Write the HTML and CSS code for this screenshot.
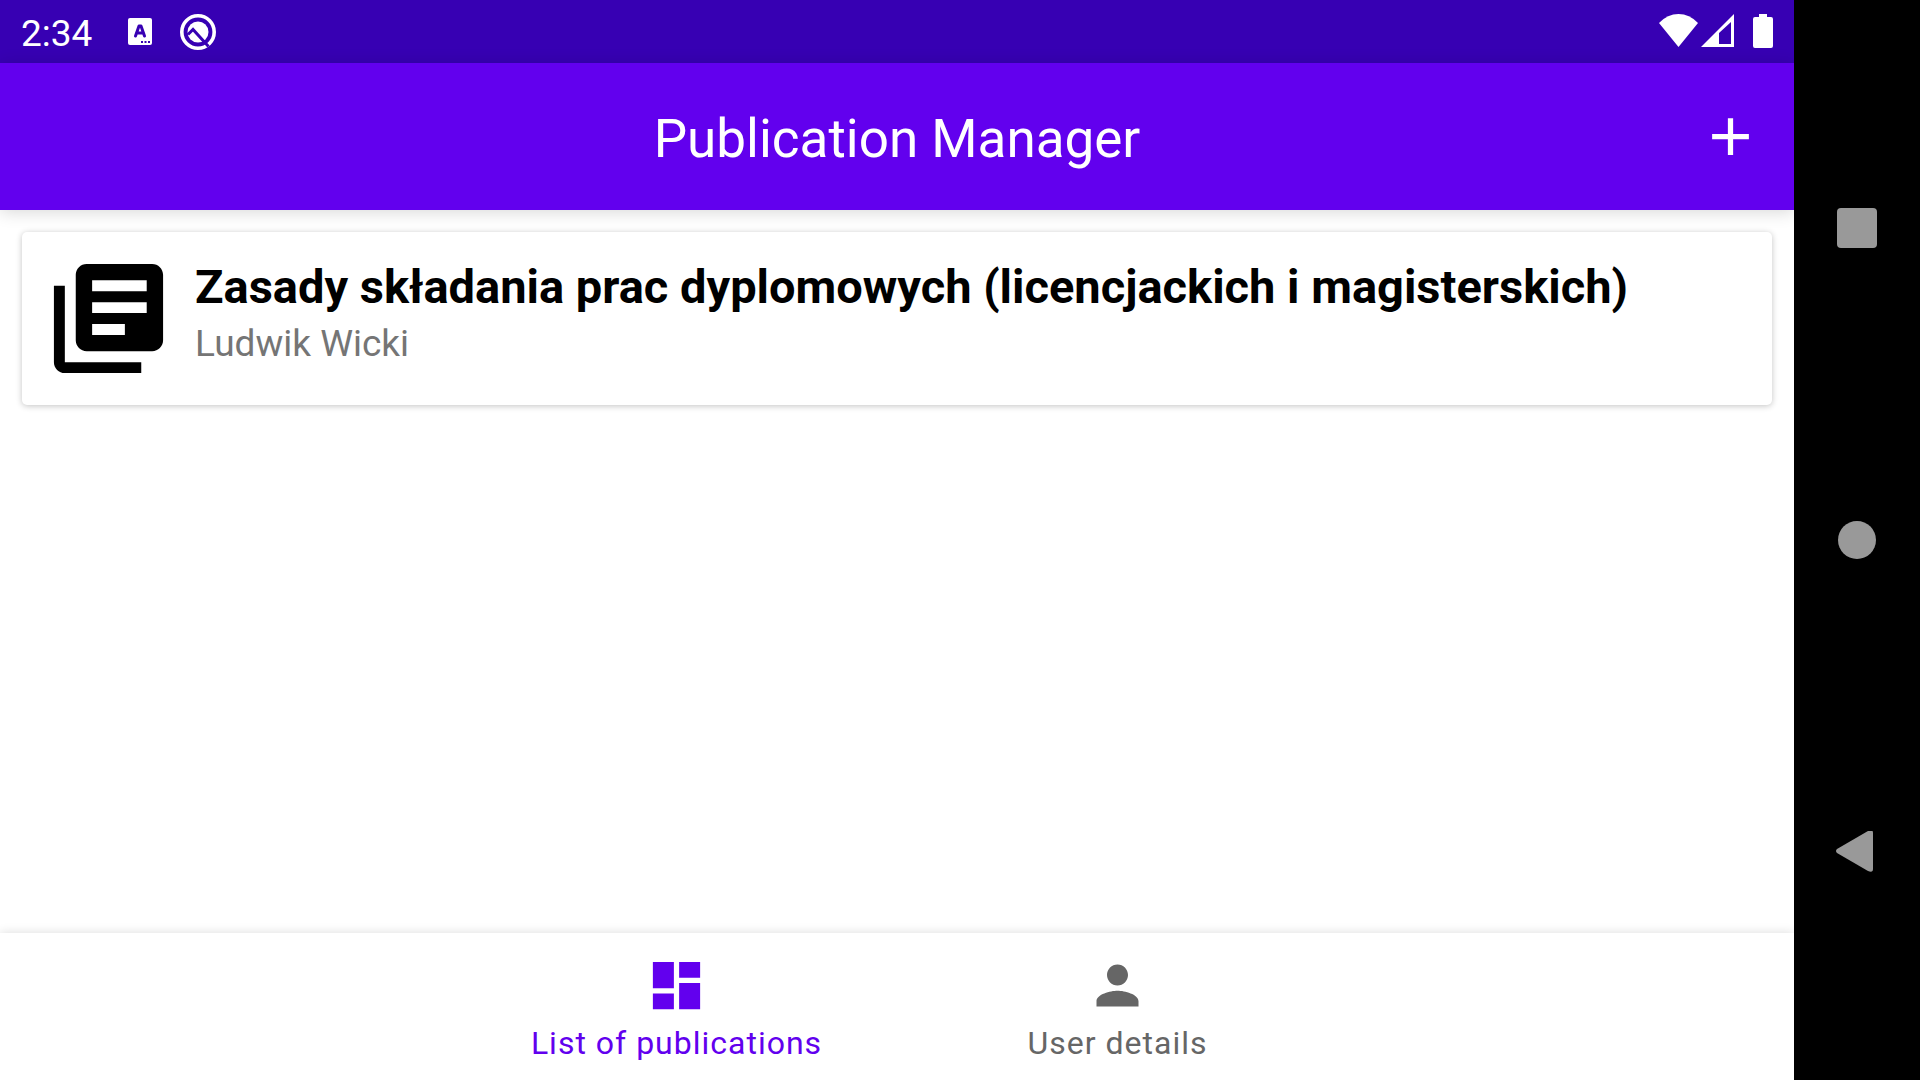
FILE: index.html
```html
<!DOCTYPE html>
<html lang="en">
<head>
<meta charset="utf-8">
<meta name="viewport" content="width=device-width, initial-scale=1">
<title>Publication Manager</title>
<link rel="stylesheet" href="styles.css">
</head>
<body>
<div class="device">
  <div class="screen">
    <div class="status-bar">
      <time class="clock">2:34</time>
      <svg class="note-icon" viewBox="0 0 24 27" aria-hidden="true">
        <rect width="24" height="27" rx="2" fill="#fff"/>
        <path d="M7.500 18 11 8h2l3.500 10M9 15h6" fill="none" stroke="#3700b3" stroke-width="3" stroke-linecap="round" stroke-linejoin="round"/>
        <path d="M13 23h2v2h-2zM16.500 23h2v2h-2zM20 23h2v2h-2z" fill="#3700b3"/>
      </svg>
      <svg class="debug-icon" viewBox="0 0 36 36" aria-hidden="true">
        <circle cx="18" cy="18" r="16.200" fill="none" stroke="#fff" stroke-width="3.600"/>
        <circle cx="18" cy="18" r="10.500" fill="#fff"/>
        <path d="M8 20.500 13 15.500 28.500 32.500" fill="none" stroke="#3700b3" stroke-width="3"/>
      </svg>
      <div class="system-icons">
        <svg class="wifi" viewBox="0 0 39 33" aria-hidden="true"><path d="M0 9Q8.500 0 19.500 0T39 9L19.500 33z" fill="#fff"/></svg>
        <svg class="signal" viewBox="0 0 33 33" aria-hidden="true"><path fill-rule="evenodd" d="M33 0v33H0zM30 8 18 19v11h12z" fill="#fff"/></svg>
        <svg class="battery" viewBox="0 0 20 34" aria-hidden="true"><path d="M6 0h8v3h4q2 0 2 2v27q0 2-2 2H2q-2 0-2-2V5q0-2 2-2h4z" fill="#fff"/></svg>
      </div>
    </div>
    <header class="app-bar">
      <h1 class="app-title">Publication Manager</h1>
      <button class="add" type="button" aria-label="Add publication">
        <svg class="icon" viewBox="0 0 24 24"><path d="M19 13h-6v6h-2v-6H5v-2h6V5h2v6h6z"/></svg>
      </button>
    </header>
    <main class="content">
      <article class="card">
        <svg class="card-icon" viewBox="0 0 24 24" aria-hidden="true"><path d="M4 6H2v14c0 1.100.9 2 2 2h14v-2H4V6zm16-4H8c-1.100 0-2 .9-2 2v12c0 1.100.9 2 2 2h12c1.100 0 2-.9 2-2V4c0-1.100-.9-2-2-2zm-1 9H9V9h10v2zm-4 4H9v-2h6v2zm4-8H9V5h10v2z"/></svg>
        <div class="card-text">
          <h2 class="card-title">Zasady składania prac dyplomowych (licencjackich i magisterskich)</h2>
          <p class="card-author">Ludwik Wicki</p>
        </div>
      </article>
    </main>
    <nav class="bottom-nav">
      <a class="tab tab-active" href="#publications" aria-current="page">
        <svg class="icon" viewBox="0 0 24 24" aria-hidden="true"><path d="M3 13h8V3H3v10zm0 8h8v-6H3v6zm10 0h8V11h-8v10zm0-18v6h8V3h-8z"/></svg>
        <span>List of publications</span>
      </a>
      <a class="tab" href="#user">
        <svg class="icon" viewBox="0 0 24 24" aria-hidden="true"><path d="M12 12c2.210 0 4-1.790 4-4s-1.790-4-4-4-4 1.790-4 4 1.790 4 4 4zm0 2c-2.670 0-8 1.340-8 4v2h16v-2c0-2.660-5.330-4-8-4z"/></svg>
        <span>User details</span>
      </a>
    </nav>
  </div>
  <div class="system-nav">
    <button class="key" type="button" aria-label="Overview"><svg class="key-icon" viewBox="0 0 42 42"><rect x="1" y="1" width="40" height="40" rx="4"/></svg></button>
    <button class="key" type="button" aria-label="Home"><svg class="key-icon" viewBox="0 0 42 42"><circle cx="21" cy="21" r="19"/></svg></button>
    <button class="key" type="button" aria-label="Back"><svg class="key-icon" viewBox="0 0 42 42"><path d="M1 18 32 0Q37-2 37 2v36q0 4-5 2L1 22Q-1 20 1 18z"/></svg></button>
  </div>
</div>
</body>
</html>
```
FILE: styles.css
```css
* {
  box-sizing: border-box;
}

body {
  margin: 0;
  font-family: Roboto, "Liberation Sans", sans-serif;
  background: #000;
}

h1, h2, p {
  margin: 0;
}

button {
  padding: 0;
  border: 0;
  background: none;
  color: inherit;
}

svg {
  display: block;
  flex: none;
}

.device {
  display: flex;
  min-height: 100vh;
}

.screen {
  flex: 1;
  min-width: 0;
  display: flex;
  flex-direction: column;
  background: #fff;
}

.status-bar {
  display: flex;
  align-items: center;
  height: 63px;
  padding: 0 21px;
  background: #3700b3;
  color: #fff;
}

.clock {
  font-size: 37px;
  line-height: 44px;
  margin-right: 36px;
  padding-top: 4px;
}

.note-icon {
  width: 24px;
  height: 27px;
  margin-right: 28px;
}

.debug-icon {
  width: 36px;
  height: 36px;
}

.system-icons {
  display: flex;
  align-items: center;
  margin-left: auto;
  padding-bottom: 2px;
}

.wifi {
  width: 39px;
  height: 33px;
  margin-right: 3px;
}

.signal {
  width: 33px;
  height: 33px;
  margin-right: 19px;
}

.battery {
  width: 20px;
  height: 34px;
}

.app-bar {
  display: grid;
  grid-template-columns: 1fr auto 1fr;
  align-items: center;
  height: 147px;
  padding: 0 32px;
  background: #6200ee;
  color: #fff;
  box-shadow: 0 2px 16px rgba(0, 0, 0, 0.16);
}

.app-title {
  grid-column: 2;
  padding-top: 5px;
  font-size: 53px;
  line-height: 62px;
  font-weight: 400;
}

.add {
  justify-self: end;
}

.icon {
  width: 63px;
  height: 63px;
  fill: currentColor;
}

.content {
  flex: 1;
  padding: 22px;
}

.card {
  display: flex;
  gap: 21px;
  padding: 21px;
  border-radius: 5px;
  background: #fff;
  box-shadow: 0 1px 6px rgba(0, 0, 0, 0.24);
}

.card-icon {
  width: 131px;
  height: 131px;
}

.card-text {
  min-width: 0;
}

.card-title {
  font-size: 47px;
  line-height: 67px;
  font-weight: 700;
  color: #000;
}

.card-author {
  font-size: 37px;
  line-height: 47px;
  color: #757575;
}

.bottom-nav {
  display: flex;
  justify-content: center;
  min-height: 147px;
  background: #fff;
  box-shadow: 0 0 10px rgba(0, 0, 0, 0.14);
}

.tab {
  display: flex;
  flex-direction: column;
  align-items: center;
  gap: 7px;
  width: 441px;
  padding-top: 21px;
  font-size: 32px;
  line-height: 38px;
  letter-spacing: 1px;
  color: #666;
  text-decoration: none;
}

.tab-active {
  color: #6200ee;
}

.system-nav {
  display: flex;
  flex-direction: column;
  justify-content: center;
  gap: 186px;
  width: 126px;
  background: #000;
}

.key {
  display: grid;
  place-items: center;
  height: 126px;
}

.key-icon {
  width: 42px;
  height: 42px;
  fill: #999;
}
```
